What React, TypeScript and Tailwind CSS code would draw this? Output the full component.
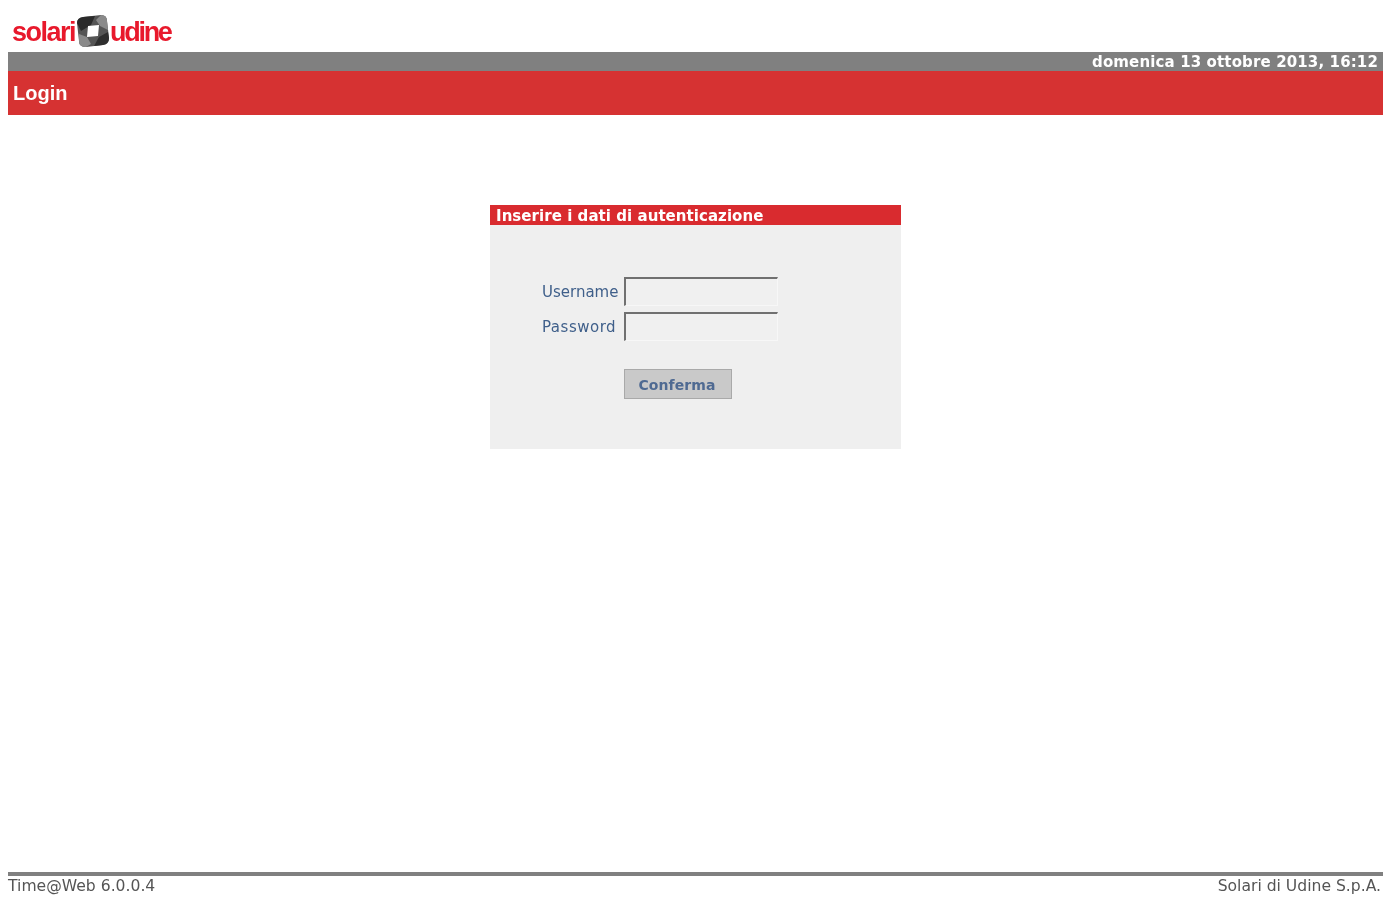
export default function App() {
  return (
    <div className="h-[900px] overflow-hidden bg-white flex flex-col pl-2 pr-[5px] font-['DejaVu_Sans',sans-serif]">
      <div className="h-[52px] flex items-end pb-[4px] pl-[4px] shrink-0">
        <div className="flex items-center h-[34px] blur-[0.5px]">
          <span className="font-['Liberation_Sans',sans-serif] font-bold text-[27px] leading-none tracking-[-1.5px] text-[#e8192c] pt-[2px]">solari</span>
          <svg width="34" height="34" viewBox="0 0 34 34" className="ml-[1px] shrink-0">
            <path d="M7 3 L25 1 Q31 1 31 7 L33 24 Q33 30 27 31 L10 33 Q3 33 3 27 L1 9 Q1 4 7 3Z" fill="#555555" />
            <path d="M7 3 L19 2 L15 11 L5 17 L1 9 Q1 4 7 3Z" fill="#2a2a2a" />
            <path d="M25 1 Q31 1 31 7 L32 16 L24 12 L20 6Z" fill="#8a8a8a" />
            <path d="M10 33 Q3 33 3 27 L3 20 L11 23 L15 30Z" fill="#8a8a8a" />
            <path d="M33 24 Q33 30 27 31 L18 32 L23 23 L32 18Z" fill="#2e2e2e" />
            <path d="M12 12 L23 11 L22 22 L11 23Z" fill="#ffffff" />
          </svg>
          <span className="font-['Liberation_Sans',sans-serif] font-bold text-[27px] leading-none tracking-[-2.3px] text-[#e8192c] pt-[2px]">udine</span>
        </div>
      </div>

      <div className="h-[19px] bg-[#808080] flex items-center justify-end pr-[5px] pt-[2px] shrink-0">
        <span className="text-[15px] font-bold text-white leading-none tracking-[0.13px] blur-[0.5px]">domenica 13 ottobre 2013, 16:12</span>
      </div>
      <div className="h-[44px] bg-[#d63232] flex items-center pl-[5px] shrink-0">
        <span className="text-[20px] font-bold text-white leading-none blur-[0.5px] font-['Liberation_Sans',sans-serif]">Login</span>
      </div>

      <div className="flex-1 flex justify-center items-start pt-[90px]">
        <div className="w-[411px] h-[244px] bg-[#efefef] flex flex-col">
          <div className="h-[20px] bg-[#d92b2f] flex items-center pl-[6px] pt-[2px] shrink-0">
            <span className="text-[15px] font-bold text-white leading-none tracking-[0.05px] blur-[0.4px]">Inserire i dati di autenticazione</span>
          </div>
          <div className="pl-[52px] pt-[51px] flex flex-col">
            <div className="flex items-center h-[30px]">
              <span className="w-[82px] text-[15px] text-[#3f5f8a] leading-none pt-[2px] blur-[0.5px]">Username</span>
              <div className="w-[154px] h-[29px] bg-[#f0f0f0] border-t-2 border-l-2 border-t-[#707070] border-l-[#707070] border-r border-b border-r-[#f7f7f7] border-b-[#f7f7f7]" />
            </div>
            <div className="flex items-center h-[30px] mt-[5px]">
              <span className="w-[82px] text-[15px] tracking-[0.5px] text-[#3f5f8a] leading-none pt-[2px] blur-[0.5px]">Password</span>
              <div className="w-[154px] h-[29px] bg-[#f0f0f0] border-t-2 border-l-2 border-t-[#707070] border-l-[#707070] border-r border-b border-r-[#f7f7f7] border-b-[#f7f7f7]" />
            </div>
            <div className="pl-[82px] pt-[28px]">
              <div className="w-[108px] h-[30px] bg-[#c9c9c9] border border-[#a9a9a9] flex items-center justify-center pr-[2px] pt-[1px]">
                <span className="text-[14px] font-bold text-[#4f6a92] leading-none tracking-[0.1px] blur-[0.5px]">Conferma</span>
              </div>
            </div>
          </div>
        </div>
      </div>

      <div className="h-[28px] shrink-0 flex flex-col">
        <div className="h-[4px] bg-[#808080] blur-[0.4px]" />
        <div className="flex justify-between pr-[2px] pt-[3px] text-[15.6px] leading-none text-[#555555]">
          <span className="blur-[0.5px]">Time@Web 6.0.0.4</span>
          <span className="blur-[0.5px]">Solari di Udine S.p.A.</span>
        </div>
      </div>
    </div>
  );
}
